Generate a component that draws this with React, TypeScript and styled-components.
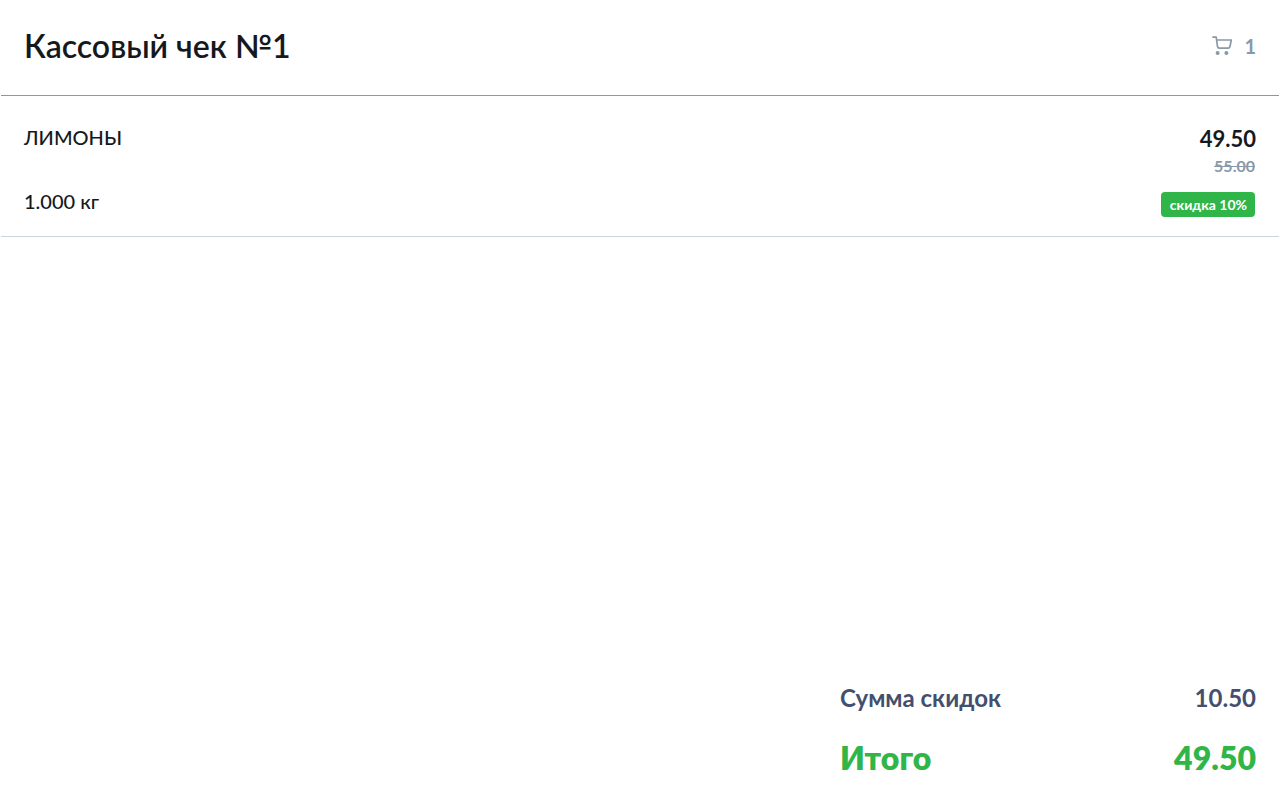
import React from "react";
import styled, { createGlobalStyle } from "styled-components";

const Global = createGlobalStyle`
  html, body { margin: 0; padding: 0; background: #fff; }
  body { font-family: Lato, "Noto Sans", sans-serif; color: #15191e; }
`;
const Page = styled.div`
  height: 800px; display: flex; flex-direction: column; overflow: hidden; padding-left: 1px;
`;
const Header = styled.header`
  flex: none; display: flex; align-items: center;
  justify-content: space-between; padding: 0 23px 4px 23px; height: 91px; border-bottom: 1px solid #8a99a8;
`;
const Title = styled.h1`
  margin: 0; font-size: 32px; line-height: 40px; font-weight: 600; color: #15191e;
`;
const CartCount = styled.div`
  display: flex; align-items: center; gap: 11px; color: #8a99a8; font-size: 20px; font-weight: 700; line-height: 22px;
`;
const Row = styled.section`
  height: 140px; flex: none; display: flex; justify-content: space-between;
  padding: 0 24px 0 23px; border-bottom: 1px solid #c9d6e2;
`;
const Left = styled.div`
  display: flex; flex-direction: column; font-size: 20px; line-height: 24px; color: #15191e;
`;
const Name = styled.div`margin-top: 29px; font-weight: 500;`;
const Qty = styled.div`margin-top: 40px; font-weight: 500;`;
const Right = styled.div`
  display: flex; flex-direction: column; align-items: flex-end;
`;
const Price = styled.div`
  margin-top: 31px; margin-right: -1px; font-size: 22px; line-height: 24px; font-weight: 700; color: #15191e;
`;
const OldPrice = styled.div`
  margin-top: 6px; font-size: 16px; line-height: 18px; font-weight: 700; color: #8a99a8; text-decoration: line-through;
`;
const Badge = styled.div`
  margin-top: 17px; height: 25px; box-sizing: border-box; padding: 0 8px 0 9px; display: flex; align-items: center;
  background: #30b548; color: #fff; border-radius: 4px; font-size: 14px; font-weight: 700;
`;
const Footer = styled.footer`
  margin-top: auto; align-self: flex-end; width: 416px; padding: 0 23px 0 0; display: flex; flex-direction: column;
`;
const SumRow = styled.div`
  display: flex; justify-content: space-between; align-items: center; height: 32px;
  font-size: 24px; line-height: 32px; font-weight: 700; color: #444f6e;
  margin-bottom: 20px;
`;
const TotalRow = styled.div`
  display: flex; justify-content: space-between; align-items: center; height: 48px; margin-bottom: 18px;
  font-size: 32px; line-height: 48px; font-weight: 800; color: #30b548;
`;

export default function App() {
  return (
    <Page>
      <Global />
      <Header>
        <Title>Кассовый чек №1</Title>
        <CartCount>
          <svg width="21" height="20" viewBox="0 0 21 20" fill="none" stroke="#8a99a8" strokeWidth="1.7" strokeLinecap="round" strokeLinejoin="round">
            <path d="M1 1.2h3.2l1.3 9.3c.2 1 .8 1.6 1.8 1.6h8.9c.9 0 1.5-.5 1.7-1.3L19.3 4H5" />
            <circle cx="5.6" cy="17" r="2" fill="#8a99a8" stroke="none" />
            <circle cx="14.4" cy="17" r="2" fill="#8a99a8" stroke="none" />
          </svg>
          <span>1</span>
        </CartCount>
      </Header>
      <Row>
        <Left>
          <Name>ЛИМОНЫ</Name>
          <Qty>1.000 кг</Qty>
        </Left>
        <Right>
          <Price>49.50</Price>
          <OldPrice>55.00</OldPrice>
          <Badge>скидка 10%</Badge>
        </Right>
      </Row>
      <Footer>
        <SumRow><span>Сумма скидок</span><span>10.50</span></SumRow>
        <TotalRow><span>Итого</span><span>49.50</span></TotalRow>
      </Footer>
    </Page>
  );
}
